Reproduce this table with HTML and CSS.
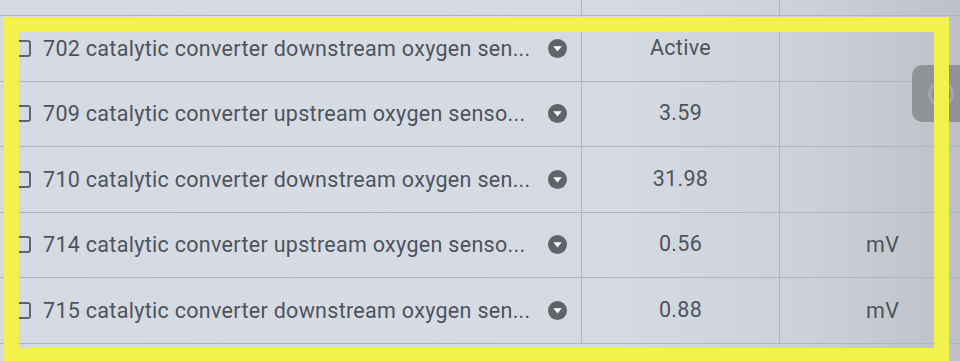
FILE: index.html
```html
<!DOCTYPE html>
<html lang="en">
<head>
<meta charset="utf-8">
<title>Data stream</title>
<link rel="stylesheet" href="styles.css">
</head>
<body>
<div class="screen">
  <div class="table">
    <div class="row partial">
      <div class="cell name"></div>
      <div class="cell value"></div>
      <div class="cell unit"></div>
    </div>
    <div class="row">
      <div class="cell name"><span class="check"></span><span class="label">702 catalytic converter downstream oxygen sen...</span><span class="drop"><svg viewBox="0 0 19 19" width="19" height="19"><circle cx="9.5" cy="9.5" r="9.5" fill="#5f6469"/><path d="M5.3 7.2h8.4l-4.2 5.2z" fill="#fff"/></svg></span></div>
      <div class="cell value">Active</div>
      <div class="cell unit"></div>
    </div>
    <div class="row">
      <div class="cell name"><span class="check"></span><span class="label">709 catalytic converter upstream oxygen senso...</span><span class="drop"><svg viewBox="0 0 19 19" width="19" height="19"><circle cx="9.5" cy="9.5" r="9.5" fill="#5f6469"/><path d="M5.3 7.2h8.4l-4.2 5.2z" fill="#fff"/></svg></span></div>
      <div class="cell value">3.59</div>
      <div class="cell unit"></div>
    </div>
    <div class="row">
      <div class="cell name"><span class="check"></span><span class="label">710 catalytic converter downstream oxygen sen...</span><span class="drop"><svg viewBox="0 0 19 19" width="19" height="19"><circle cx="9.5" cy="9.5" r="9.5" fill="#5f6469"/><path d="M5.3 7.2h8.4l-4.2 5.2z" fill="#fff"/></svg></span></div>
      <div class="cell value">31.98</div>
      <div class="cell unit"></div>
    </div>
    <div class="row">
      <div class="cell name"><span class="check"></span><span class="label">714 catalytic converter upstream oxygen senso...</span><span class="drop"><svg viewBox="0 0 19 19" width="19" height="19"><circle cx="9.5" cy="9.5" r="9.5" fill="#5f6469"/><path d="M5.3 7.2h8.4l-4.2 5.2z" fill="#fff"/></svg></span></div>
      <div class="cell value">0.56</div>
      <div class="cell unit">mV</div>
    </div>
    <div class="row">
      <div class="cell name"><span class="check"></span><span class="label">715 catalytic converter downstream oxygen sen...</span><span class="drop"><svg viewBox="0 0 19 19" width="19" height="19"><circle cx="9.5" cy="9.5" r="9.5" fill="#5f6469"/><path d="M5.3 7.2h8.4l-4.2 5.2z" fill="#fff"/></svg></span></div>
      <div class="cell value">0.88</div>
      <div class="cell unit">mV</div>
    </div>
  </div>
  <div class="side-button"><span class="side-dot"></span></div>
  <div class="highlight"></div>
</div>
</body>
</html>
```
FILE: styles.css
```css
html, body {
  margin: 0;
  padding: 0;
  width: 960px;
  height: 361px;
  overflow: hidden;
}
body {
  font-family: Roboto, "Noto Sans", "Liberation Sans", sans-serif;
  color: #4d535d;
  background: #b9bdc3;
}
.screen {
  position: relative;
  width: 960px;
  height: 361px;
  overflow: hidden;
  background: linear-gradient(90deg, #d4d9e2 0%, #d7dce4 35%, #d5dae2 65%, #ccd0d7 85%, #bdc1c7 100%);
}
.table {
  display: flex;
  flex-direction: column;
  margin-top: -50px;
  width: 1000px;
}
.row {
  display: grid;
  grid-template-columns: 581px 198px 1fr;
  height: 65.5px;
  border-bottom: 1px solid #afb4bd;
  box-sizing: border-box;
}
.row.partial {
  height: 66px;
}
.cell {
  display: flex;
  align-items: center;
  font-size: 21.5px;
  letter-spacing: 0.3px;
}
.cell + .cell {
  border-left: 1px solid #afb4bd;
}
.name {
  padding-left: 14px;
  padding-right: 14px;
  gap: 12px;
}
.check {
  width: 13px;
  height: 13px;
  border: 2px solid #5b6576;
  border-radius: 3px;
  flex: none;
}
.label {
  white-space: nowrap;
}
.drop {
  margin-left: auto;
  display: flex;
}
.value {
  justify-content: center;
  padding-bottom: 2px;
}
.unit {
  padding-left: 86px;
}
.side-button {
  position: absolute;
  left: 912px;
  top: 65px;
  width: 70px;
  height: 57px;
  border-radius: 10px;
  background: #8f9398;
  display: flex;
  align-items: center;
  padding-left: 16px;
  box-sizing: border-box;
}
.side-dot {
  width: 26px;
  height: 26px;
  border-radius: 50%;
  border: 3px solid #a3a6aa;
  box-sizing: border-box;
}
.highlight {
  position: absolute;
  left: 4px;
  top: 17px;
  width: 945px;
  height: 346px;
  border: 15px solid #f3f14b;
  box-sizing: border-box;
}
```
